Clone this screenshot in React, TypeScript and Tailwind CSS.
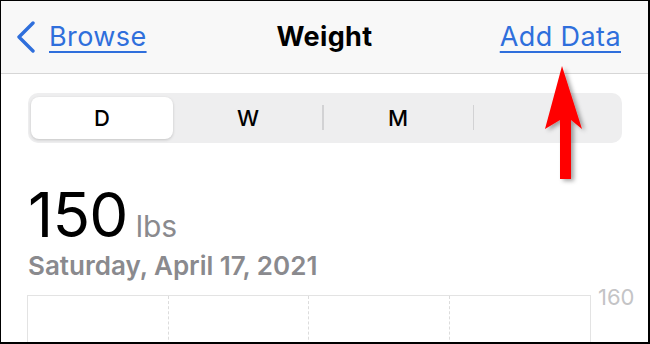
import React from "react";

export default function App() {
  const font = { fontFamily: "Inter, 'Liberation Sans', sans-serif" };
  return (
    <div className="relative w-[650px] h-[344px] overflow-hidden bg-white border-l border-t border-r-2 border-b-2 border-black" style={font}>
      {/* Nav bar */}
      <div className="h-[73px] bg-[#f8f8f8] border-b border-[#d6d6d6] grid grid-cols-[1fr_auto_1fr] items-center">
        <div className="flex items-center pl-[15px]">
          <svg width="20" height="32" viewBox="0 0 20 32" className="mr-[13px]">
            <path d="M17 2 L3 16 L17 30" fill="none" stroke="#2f6fdc" strokeWidth="3.4" strokeLinecap="round" strokeLinejoin="round" />
          </svg>
          <span className="text-[27px] leading-[32px] text-[#2f6fdc] underline decoration-[2px] underline-offset-[5px] tracking-[0.4px]">Browse</span>
        </div>
        <div className="text-[27px] leading-[32px] font-bold text-black tracking-[0.4px]">Weight</div>
        <div className="flex justify-end pr-[27px]">
          <span className="text-[27px] leading-[32px] text-[#2f6fdc] underline decoration-[2px] underline-offset-[5px] tracking-[0.4px]">Add Data</span>
        </div>
      </div>

      {/* Segmented control */}
      <div className="mt-[19px] ml-[27px] mr-[26px] h-[50px] rounded-[10px] bg-[#eeeeef] px-[3px] py-[4px] flex">
        <div className="w-[142px] rounded-[8px] bg-white shadow-[0_1px_3px_rgba(0,0,0,0.18)] flex items-center justify-center text-[22px] font-medium text-black">D</div>
        <div className="w-[150px] flex items-center justify-center text-[22px] font-medium text-black">W</div>
        <div className="relative w-[150px] flex items-center justify-center text-[22px] font-medium text-black">
          <span className="absolute left-[-1px] top-[8px] h-[25px] w-[1.5px] bg-[#d2d2d4]" />
          M
          <span className="absolute right-[-1px] top-[8px] h-[25px] w-[1.5px] bg-[#d2d2d4]" />
        </div>
        <div className="flex-1" />
      </div>

      {/* Value */}
      <div className="ml-[27px] mt-[42px] flex items-baseline">
        <span className="text-[62px] leading-[60px] font-normal text-black tracking-[-0.8px]">150</span>
        <span className="ml-[8px] text-[30px] leading-[30px] text-[#8a8a8e]">lbs</span>
      </div>
      <div className="ml-[27px] mt-[6px] text-[26px] leading-[30px] font-semibold text-[#8a8a8e] tracking-[0px]">Saturday, April 17, 2021</div>

      {/* Chart */}
      <div className="mt-[14px] ml-[26px] flex">
        <div className="w-[564px] h-[60px] border-t border-l border-r border-[#e3e3e3] grid grid-cols-4">
          <div className="border-r border-dashed border-[#dcdcdc]" />
          <div className="border-r border-dashed border-[#dcdcdc]" />
          <div className="border-r border-dashed border-[#dcdcdc]" />
          <div />
        </div>
        <div className="ml-[7px] -mt-[9px] text-[22px] leading-[22px] text-[#c4c4c6]">160</div>
      </div>

      {/* Red arrow overlay */}
      <svg className="absolute left-0 top-0 pointer-events-none" width="650" height="344" viewBox="0 0 650 344">
        <defs>
          <filter id="sh" x="-50%" y="-50%" width="200%" height="200%">
            <feDropShadow dx="3" dy="2" stdDeviation="2" floodColor="#000" floodOpacity="0.35" />
          </filter>
        </defs>
        <polygon points="561,65 581,128 570,119 570,178 559,178 559,119 544,128" fill="#ff0000" filter="url(#sh)" />
      </svg>
    </div>
  );
}
